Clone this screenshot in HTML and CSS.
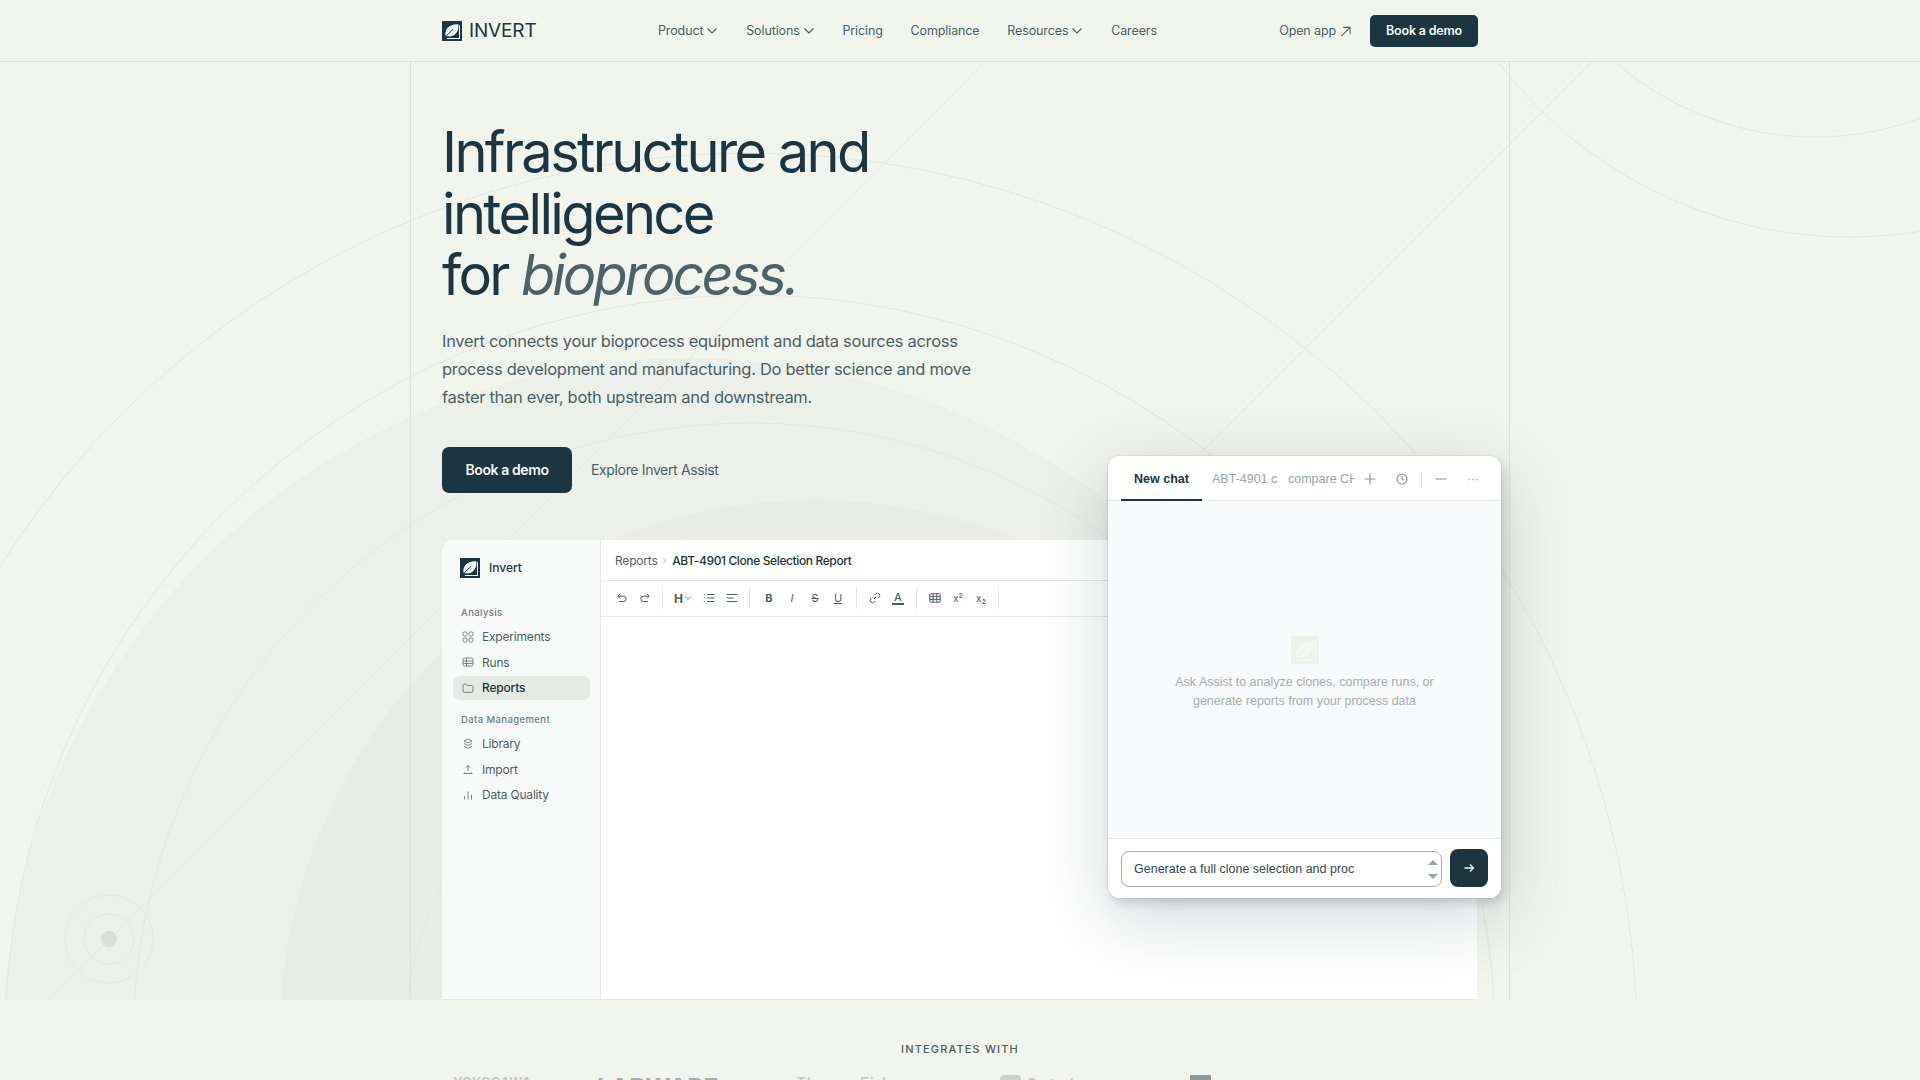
FILE: index.html
```html
<!DOCTYPE html>
<html lang="en">
<head>
<meta charset="utf-8">
<title>Invert</title>
<link rel="stylesheet" href="styles.css">
</head>
<body>
<svg class="defs" width="0" height="0" aria-hidden="true">
  <symbol id="logo" viewBox="0 0 20 20">
    <rect width="20" height="20" fill="currentColor"/>
    <path class="logo-leaf" d="M3.500 14.600C2.400 8 8 2.600 16.400 3.400c1 7.600-4.400 13-11.400 11.900-.7-.1-1.300-.3-1.500-.7z"/>
    <path class="logo-cut" d="M2.800 16.400 11 8.200"/>
    <path class="logo-leaf" d="M4.800 16.900H17V4.800l1-1.200v14.300H4.800z"/>
  </symbol>
  <symbol id="chev" viewBox="0 0 12 12"><path d="M1.500 3.500 6 8l4.500-4.500" fill="none" stroke="currentColor" stroke-width="1.200"/></symbol>
</svg>

<header class="topnav">
  <div class="nav-inner">
    <a class="brand"><svg class="brand-mark"><use href="#logo"/></svg><span class="brand-name">INVERT</span></a>
    <nav class="nav-links">
      <a class="nav-link">Product <svg class="nav-chev"><use href="#chev"/></svg></a>
      <a class="nav-link">Solutions <svg class="nav-chev"><use href="#chev"/></svg></a>
      <a class="nav-link">Pricing</a>
      <a class="nav-link">Compliance</a>
      <a class="nav-link">Resources <svg class="nav-chev"><use href="#chev"/></svg></a>
      <a class="nav-link">Careers</a>
    </nav>
    <div class="nav-end">
      <a class="nav-link">Open app <svg class="nav-arrow" viewBox="0 0 12 12"><path d="M1.500 11 10.500 2M3.500 1.500H11V9" fill="none" stroke="currentColor" stroke-width="1.100"/></svg></a>
      <a class="btn-small">Book a demo</a>
    </div>
  </div>
</header>

<section class="hero">
  <svg class="hero-art" viewBox="0 0 1920 938" aria-hidden="true">
    <g transform="translate(0 -62)">
      <circle class="fill-a" cx="688" cy="1043" r="685"/>
      <circle class="fill-b" cx="815" cy="1035" r="535"/>
      <circle class="ring" cx="750" cy="1040" r="887"/>
      <circle class="ring" cx="750" cy="1040" r="745"/>
      <circle class="ring" cx="750" cy="1040" r="617"/>
      <circle class="ring" cx="750" cy="1040" r="345"/>
      <circle class="ring" cx="1850" cy="-204" r="441"/>
      <circle class="ring" cx="1815" cy="-167" r="304"/>
      <path class="ring" d="M985 62 49 1000M1592 62 1198 456"/>
      <circle class="ring" cx="109" cy="939" r="25"/>
      <circle class="ring" cx="109" cy="939" r="44"/>
      <circle class="target-dot" cx="109" cy="939" r="8"/>
    </g>
  </svg>
  <div class="frame">
    <h1 class="headline">Infrastructure and<br>intelligence<br>for <em class="headline-em">bioprocess.</em></h1>
    <p class="lede">Invert connects your bioprocess equipment and data sources across<br>process development and manufacturing. Do better science and move<br>faster than ever, both upstream and downstream.</p>
    <div class="cta-row">
      <a class="btn-large">Book a demo</a>
      <a class="cta-link">Explore Invert Assist</a>
    </div>

    <div class="app">
      <aside class="side">
        <div class="side-brand"><svg class="side-mark"><use href="#logo"/></svg><span>Invert</span></div>
        <div class="side-label">Analysis</div>
        <a class="side-row"><svg class="ico" viewBox="0 0 12 12"><rect x="1" y="1" width="4" height="4" rx="1.200"/><rect x="7" y="1" width="4" height="4" rx="1.200"/><rect x="1" y="7" width="4" height="4" rx="1.200"/><rect x="7" y="7" width="4" height="4" rx="1.200"/></svg>Experiments</a>
        <a class="side-row"><svg class="ico" viewBox="0 0 12 12"><rect x="1" y="2" width="10" height="8" rx="1.500"/><path d="M1 5h10M1 7.500h10M4.500 2v8"/></svg>Runs</a>
        <a class="side-row side-row-on"><svg class="ico" viewBox="0 0 12 12"><path d="M1 3.500c0-.8.500-1.300 1.200-1.300H4.500l1 1.300h3.800c1 0 1.700.6 1.700 1.500v4c0 .8-.6 1.300-1.400 1.300H2.400C1.600 10.300 1 9.800 1 9z"/></svg>Reports</a>
        <div class="side-label side-label-2">Data Management</div>
        <a class="side-row"><svg class="ico" viewBox="0 0 12 12"><path d="M6 1 10 3 6 5 2 3zM2 5.500l4 2 4-2M2 8l4 2.500L10 8"/></svg>Library</a>
        <a class="side-row"><svg class="ico" viewBox="0 0 12 12"><path d="M6 8V2.500M4 4.500l2-2 2 2M1.500 10.500h9M2.500 10.500v-1M9.500 10.500v-1"/></svg>Import</a>
        <a class="side-row"><svg class="ico" viewBox="0 0 12 12"><path d="M2.500 10.500V7M6 10.500V2.500M9.500 10.500V5.500"/></svg>Data Quality</a>
      </aside>
      <div class="doc">
        <div class="crumbs"><span>Reports</span><span class="crumb-sep">›</span><b class="crumb-now">ABT-4901 Clone Selection Report</b></div>
        <div class="toolbar">
          <div class="tool-group">
            <svg class="tool" viewBox="0 0 12 12"><path d="M4 2 1.800 4.200 4 6.400M2 4.200h5.500a2.500 2.500 0 0 1 0 5.300H3"/></svg>
            <svg class="tool" viewBox="0 0 12 12"><path d="M8 2l2.200 2.200L8 6.400M10 4.200H4.500a2.500 2.500 0 0 0 0 5.300H9"/></svg>
          </div>
          <div class="tool-group tool-group-2">
            <span class="tool-h">H<svg class="tool-chev"><use href="#chev"/></svg></span>
            <svg class="tool" viewBox="0 0 12 12"><path d="M4 2.500h7.500M4 6h7.500M4 9.500h7.500M.8 2.500h1M.8 6h1M.8 9.500h1"/></svg>
            <svg class="tool" viewBox="0 0 12 12"><path d="M.8 2.500h10.500M.8 6h7M.8 9.500h10.500"/></svg>
          </div>
          <div class="tool-group tool-group-3">
            <span class="tool-t tool-b">B</span>
            <span class="tool-t tool-i">I</span>
            <span class="tool-t tool-s">S</span>
            <span class="tool-t tool-u">U</span>
          </div>
          <div class="tool-group tool-group-4">
            <svg class="tool" viewBox="0 0 12 12"><path d="M5 7 7 5M5.800 2.900l1-1a2.100 2.100 0 0 1 3.300 3.300l-1 1M6.200 9.100l-1 1a2.100 2.100 0 0 1-3.300-3.300l1-1"/></svg>
            <span class="tool-t tool-a">A</span>
          </div>
          <div class="tool-group">
            <svg class="tool" viewBox="0 0 12 12"><rect x=".8" y="1.800" width="10.400" height="8.400" rx="1"/><path d="M.8 4.600h10.400M.8 7.400h10.400M4.200 1.800v8.400M7.800 1.800v8.400"/></svg>
            <span class="tool-t tool-x">x²</span>
            <span class="tool-t tool-x">x₂</span>
          </div>
        </div>
      </div>
    </div>

    <div class="chat">
      <div class="chat-head">
        <span class="chat-tab chat-tab-on">New chat</span>
        <span class="chat-tab-clip chat-clip-1">ABT-4901 clone</span>
        <span class="chat-tab-clip chat-clip-2">compare CHO</span>
        <svg class="chat-ico chat-plus" viewBox="0 0 12 12"><path d="M6 .5v11M.5 6h11"/></svg>
        <svg class="chat-ico chat-clock" viewBox="0 0 12 12"><circle cx="6" cy="6" r="5"/><path d="M6 3v3l2 1.200"/></svg>
        <span class="chat-div"></span>
        <svg class="chat-ico chat-min" viewBox="0 0 12 12"><path d="M.5 6h11"/></svg>
        <span class="chat-dots">···</span>
      </div>
      <div class="chat-body">
        <svg class="chat-mark"><use href="#logo"/></svg>
        <p class="chat-hint">Ask Assist to analyze clones, compare runs, or<br>generate reports from your process data</p>
      </div>
      <div class="chat-foot">
        <div class="chat-input">
          <span class="chat-text">Generate a full clone selection and proc</span>
          <span class="spin"><i class="spin-up"></i><i class="spin-down"></i></span>
        </div>
        <a class="chat-send"><svg viewBox="0 0 12 12" class="send-arrow"><path d="M1.500 6h9M7 2.500 10.500 6 7 9.500"/></svg></a>
      </div>
    </div>
  </div>
</section>

<section class="integrates">
  <h2 class="int-title">INTEGRATES WITH</h2>
  <div class="int-logos">
    <span class="int-logo int-1">YOKOGAWA</span>
    <span class="int-logo int-2">LABWARE</span>
    <span class="int-logo int-3">Thermo Fisher</span>
    <span class="int-logo int-4"><i class="int-sq-r"></i>Sartorius</span>
    <span class="int-logo int-5"><i class="int-sq"></i></span>
  </div>
</section>
</body>
</html>
```
FILE: styles.css
```css
* { box-sizing: border-box; }
html, body { margin: 0; padding: 0; }
body {
  background: #f2f4ee;
  color: #1c3540;
  font-family: Inter, "Liberation Sans", sans-serif;
  overflow-x: hidden;
}
a { text-decoration: none; color: inherit; }
.defs { position: absolute; }
.logo-leaf { fill: #f5f7f3; }
.logo-cut { stroke: currentColor; stroke-width: .9; fill: none; }

/* nav */
.topnav { height: 62px; border-bottom: 1px solid #e0e3dd; }
.nav-inner {
  width: 1100px; height: 61px; margin: 0 auto; padding: 0 32px;
  display: flex; align-items: center;
}
.brand { display: flex; align-items: center; gap: 7px; width: 216px; color: #1c3540; }
.brand-mark { width: 20px; height: 20px; }
.brand-name { font-size: 19px; letter-spacing: -.15px; font-weight: 400; }
.nav-links { display: flex; gap: 27.800px; flex: 1; }
.nav-link {
  font-size: 12.500px; color: #4c5f66; letter-spacing: -.12px;
  display: inline-flex; align-items: center; gap: 3px;
}
.nav-chev { width: 12px; height: 12px; }
.nav-arrow { width: 11px; height: 11px; margin-left: 1px; margin-top: 2px; }
.nav-end { display: flex; align-items: center; gap: 19px; }
.btn-small {
  width: 108px; height: 32px; background: #1c3540; color: #f5f7f3; border-radius: 5px;
  font-size: 12.500px; font-weight: 600; letter-spacing: -.2px;
  display: flex; align-items: center; justify-content: center;
}

/* hero */
.hero, .integrates {
  background-image: radial-gradient(circle, rgba(28, 53, 64, .014) .8px, transparent 1px);
  background-size: 8px 8px;
}
.hero { position: relative; overflow: hidden; height: 938px; }
.hero-art { position: absolute; left: 0; top: 0; width: 1920px; height: 938px; }
.fill-a { fill: #edefea; }
.fill-b { fill: #e9ebe6; }
.ring { fill: none; stroke: #e5e7e2; stroke-width: 1; }
.target-dot { fill: #dcdfd9; }
.frame {
  position: relative; width: 1100px; height: 938px; margin: 0 auto;
  border-left: 1px solid #dfe2dc; border-right: 1px solid #dfe2dc;
  padding: 60px 31px 0;
  display: flex; flex-direction: column;
}
.headline {
  margin: 0; font-size: 56px; line-height: 61.600px; font-weight: 400;
  letter-spacing: -2.650px; color: #1c3540;
}
.headline-em { color: #4d6168; font-style: italic; letter-spacing: -3px; }
.lede {
  margin: 20px 0 0; font-size: 16.500px; line-height: 28px; color: #4c5f66; letter-spacing: -.29px;
}
.cta-row { display: flex; align-items: center; gap: 19px; margin-top: 36px; }
.btn-large {
  width: 130px; height: 46px; background: #1c3540; color: #f5f7f3; border-radius: 7px;
  font-size: 14px; font-weight: 600; letter-spacing: -.4px;
  display: flex; align-items: center; justify-content: center;
}
.cta-link { font-size: 14px; color: #4c5f66; letter-spacing: -.35px; }

/* app */
.app {
  margin-top: 47px; width: 1035px; height: 460px;
  display: flex; background: #fff; border-radius: 12px 12px 0 0; overflow: hidden;
  border-bottom: 1px solid #e4e6e1;
}
.side {
  width: 159px; flex: none; background: #f8fafa; border-right: 1px solid #e7e9e5;
  padding: 18px 10px 0 11px;
}
.side-brand {
  display: flex; align-items: center; gap: 9px; padding-left: 7px;
  font-size: 12px; font-weight: 500; color: #1c3540; height: 20px;
}
.side-mark { width: 20px; height: 20px; }
.side-label {
  font-size: 9.500px; color: #6b7b80; letter-spacing: .4px; font-weight: 500;
  padding-left: 8px; margin-top: 29px; margin-bottom: 6px; line-height: 12px;
}
.side-label-2 { margin-top: 14px; }
.side-row {
  display: flex; align-items: center; gap: 8px; height: 24px; margin-bottom: 1.500px;
  padding-left: 9px; font-size: 12px; color: #4c5f66; letter-spacing: -.2px; border-radius: 7px;
}
.side-row-on { background: #e7e9e4; color: #1c3540; font-weight: 500; }
.ico { width: 12px; height: 12px; flex: none; fill: none; stroke: #66777c; stroke-width: .9; }
.doc { flex: 1; min-width: 0; }
.crumbs {
  height: 41px; display: flex; align-items: center; padding: 1px 0 0 14px; gap: 5px;
  font-size: 12px; letter-spacing: -.2px; color: #4c5f66; border-bottom: 1px solid #e7e9e5;
}
.crumb-sep { color: #b5bdbf; font-size: 10px; }
.crumb-now { font-weight: 500; color: #1c3540; letter-spacing: -.38px; margin-left: 1px; }
.toolbar {
  height: 36px; display: flex; align-items: center; padding-left: 15px;
  border-bottom: 1px solid #e7e9e5;
}
.tool-group {
  display: flex; align-items: center; gap: 11px; height: 22px; padding-right: 11px; margin-right: 11px;
  border-right: 1px solid #e4e6e2;
}
.tool-group-2 { margin-right: 13px; }
.tool-group-3 { margin-right: 12px; padding-right: 12px; }
.tool-group-4 { margin-right: 12px; padding-right: 12px; }
.tool { width: 12px; height: 12px; fill: none; stroke: #4c5f66; stroke-width: 1; flex: none; }
.tool-h { display: inline-flex; align-items: center; font-size: 12px; font-weight: 700; color: #4c5f66; }
.tool-chev { width: 8px; height: 8px; margin-left: 1px; }
.tool-t { width: 12px; text-align: center; font-size: 11px; color: #4c5f66; line-height: 14px; }
.tool-b { font-weight: 700; }
.tool-i { font-style: italic; }
.tool-s { text-decoration: line-through; }
.tool-u { text-decoration: underline; }
.tool-a { font-weight: 500; border-bottom: 2px solid #4c5f66; line-height: 12px; }
.tool-x { font-size: 10px; }

/* chat */
.chat {
  position: absolute; left: 697px; top: 394px; width: 393px; height: 442px;
  background: #fff; border-radius: 12px; overflow: hidden;
  display: flex; flex-direction: column;
  font-family: "Liberation Sans", Arial, sans-serif;
  box-shadow: 0 0 0 1px rgba(28, 53, 64, .05), 3px 5px 10px rgba(28, 53, 64, .18), 0 20px 70px rgba(28, 53, 64, .2);
}
.chat-head {
  height: 45px; flex: none; border-bottom: 1px solid #e8eae6; position: relative;
  display: flex; align-items: center; padding-left: 13px; padding-top: 1px;
}
.chat-tab { font-size: 12.500px; color: #1c3540; }
.chat-tab-on {
  width: 81px; height: 45px; display: flex; align-items: center; justify-content: center;
  font-weight: 700; border-bottom: 2px solid #1c3540; margin-top: -1px; padding-top: 3px;
}
.chat-tab-clip {
  font-size: 12.500px; color: #9aa3a6; white-space: nowrap; overflow: hidden; flex: none;
}
.chat-clip-1 { width: 66px; margin-left: 10px; }
.chat-clip-2 { width: 67px; margin-left: 10px; }
.chat-ico { width: 12px; height: 12px; fill: none; stroke: #8a9598; stroke-width: 1.100; flex: none; }
.chat-plus { margin-left: 9px; }
.chat-clock { margin-left: 20px; }
.chat-div { width: 1px; height: 16px; background: #e4e6e2; margin-left: 13px; flex: none; }
.chat-min { margin-left: 13px; }
.chat-dots { margin-left: 20px; font-size: 12px; color: #8a9598; }
.chat-body {
  flex: 1; background: #f9fafb;
  display: flex; flex-direction: column; align-items: center; padding-top: 135px;
}
.chat-mark { width: 28px; height: 28px; color: #eff1ec; }
.chat-hint {
  margin: 9px 0 0; font-size: 12.500px; line-height: 19px; text-align: center; color: #a7aeb0;
}
.chat-foot {
  height: 60px; flex: none; border-top: 1px solid #e8eae6; background: #fff;
  display: flex; align-items: flex-start; gap: 8px; padding: 10px 13px 0;
}
.chat-input {
  width: 321px; height: 36px; margin-top: 2px; background: #fff; border: 1px solid #a2adaf; border-radius: 8px;
  display: flex; align-items: center; justify-content: space-between; padding: 0 3px 0 12px;
}
.chat-text { font-size: 12.500px; color: #33474f; }
.spin { display: flex; flex-direction: column; gap: 9px; }
.spin-up, .spin-down { display: block; width: 0; height: 0; border-left: 5px solid transparent; border-right: 5px solid transparent; }
.spin-up { border-bottom: 5px solid #9aa3a6; }
.spin-down { border-top: 5px solid #9aa3a6; }
.chat-send {
  width: 38px; height: 38px; background: #1c3540; border-radius: 8px;
  display: flex; align-items: center; justify-content: center;
}
.send-arrow { width: 12px; height: 12px; fill: none; stroke: #f5f7f3; stroke-width: 1.300; }

/* integrates */
.integrates { text-align: center; padding-top: 42px; }
.int-title {
  margin: 0; font-size: 11px; line-height: 14px; font-weight: 500; letter-spacing: 1.150px; color: #4c5f66;
}
.int-logos {
  width: 1036px; margin: 15px 0 0 453px; display: flex; align-items: flex-start;
  color: #a7adab; font-weight: 700; line-height: 26px;
}
.int-logo { display: inline-flex; align-items: flex-start; gap: 6px; flex: none; }
.int-1 { width: 144px; font-size: 13px; line-height: 16px; opacity: .6; padding-top: 3px; }
.int-2 { width: 199px; font-size: 24.500px; padding-top: 3px; }
.int-3 { width: 204px; font-size: 16px; line-height: 18px; font-weight: 500; opacity: .6; padding-top: 3px; }
.int-4 { width: 190px; font-size: 14px; opacity: .6; }
.int-sq { display: block; width: 21px; height: 21px; margin-top: 4px; background: #8f9a9c; }
.int-sq-r { display: block; width: 21px; height: 21px; margin-top: 4px; background: #b4b9b7; border-radius: 4px; }
```
